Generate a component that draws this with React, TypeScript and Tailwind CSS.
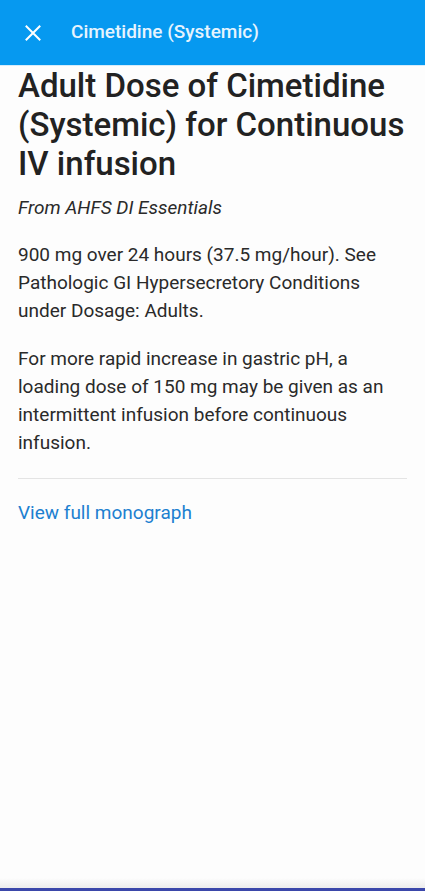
import React from "react";

const App = () => {
  return (
    <div className="flex h-[891px] w-[425px] flex-col overflow-hidden bg-[#fdfdfd] font-['Roboto',sans-serif]">
      <div className="flex h-[66px] shrink-0 items-center bg-[#0699f0] border-b border-[#d6ecfb]">
        <svg className="ml-[25px] h-[16px] w-[16px]" viewBox="0 0 16 16" fill="none" stroke="white" strokeWidth="2" strokeLinecap="square">
          <path d="M1.5 1.5 L14.5 14.5 M14.5 1.5 L1.5 14.5" />
        </svg>
        <span className="ml-[30px] text-[19px] font-medium text-[#e6f4fe]">Cimetidine (Systemic)</span>
      </div>

      <div className="flex-1 px-[18px]">
        <h1 className="mt-0 text-[33px] font-medium leading-[39px] text-[#222222]">
          Adult Dose of Cimetidine (Systemic) for Continuous IV infusion
        </h1>
        <p className="mt-[13px] text-[19px] italic leading-[24px] text-[#2a2a2a]">From AHFS DI Essentials</p>
        <p className="mt-[21px] text-[19px] leading-[28px] text-[#2a2a2a]">
          900 mg over 24 hours (37.5 mg/hour). See Pathologic GI Hypersecretory Conditions under Dosage: Adults.
        </p>
        <p className="mt-[20px] text-[19px] leading-[28px] text-[#2a2a2a]">
          For more rapid increase in gastric pH, a loading dose of 150 mg may be given as an intermittent infusion before continuous infusion.
        </p>
        <div className="mt-[21px] h-px bg-[#e4e4e4]" />
        <p className="mt-[20px] text-[19px] leading-[28px] text-[#1c80d0]">View full monograph</p>
      </div>

      <div className="h-[10px] shrink-0 bg-gradient-to-b from-transparent to-[#ececec]" />
      <div className="h-[3px] shrink-0 bg-[#3b47aa]" />
    </div>
  );
};

export default App;
